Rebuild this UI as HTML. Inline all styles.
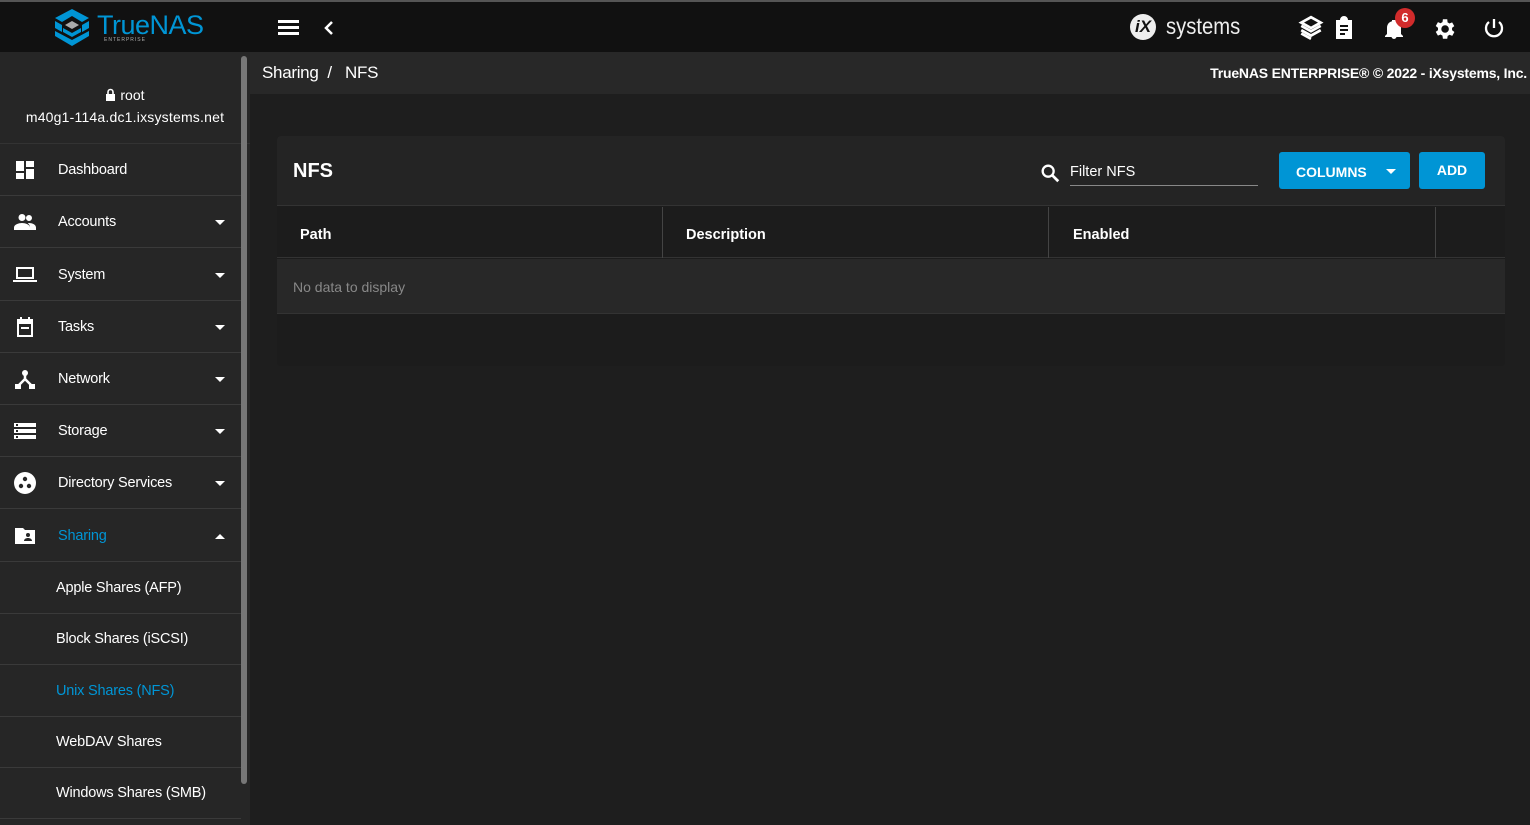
<!DOCTYPE html>
<html><head><meta charset="utf-8"><style>
*{margin:0;padding:0;box-sizing:border-box}
body{width:1530px;height:825px;overflow:hidden;background:#1e1e1e;font-family:"Liberation Sans",sans-serif;color:#fff;position:relative}
.top{position:absolute;left:0;top:0;width:1530px;height:52px;background:#111;border-top:2px solid #555}
.side{position:absolute;left:0;top:52px;width:250px;height:773px;background:#262626}
.scroll{position:absolute;left:241px;top:56px;width:6px;height:728px;background:#777;border-radius:3px}
.user{position:absolute;left:0;top:0;width:250px;height:92px;text-align:center;font-size:14px;border-bottom:1px solid #333}
.item{position:absolute;left:0;width:241px;height:52px;border-bottom:1px solid #3a3a3a;font-size:14.5px;display:flex;align-items:center}
.item .ic{position:absolute;left:13px;top:14px;width:24px;height:24px}
.item .lb{position:absolute;left:58px;top:18px;letter-spacing:-0.2px}
.item .ar{position:absolute;left:215px;top:24px;width:0;height:0;border-left:5px solid transparent;border-right:5px solid transparent;border-top:5px solid #fff}
.sub .lb{left:56px}
.crumb{position:absolute;left:250px;top:52px;width:1280px;height:42px;background:#282828}
.card{position:absolute;left:277px;top:136px;width:1228px;height:230px;background:#1c1c1c;border-radius:4px;overflow:hidden}
.btn{position:absolute;background:#0095d5;border-radius:3px;font-weight:bold;font-size:14px;color:#fff}
</style></head><body>
<div class="top">
 <svg style="position:absolute;left:53px;top:6px" width="38" height="40" viewBox="0 0 38 40"><g fill="#0095d5"><path d="M19 1 L36 10 L29 14 L19 8 L9 14 L2 10Z"/><path d="M2 13 L9 17 L9 24 L2 20Z M36 13 L29 17 L29 24 L36 20Z"/><path d="M2 23 L19 32 L36 23 L36 28 L19 38 L2 28Z"/><path d="M12 17 L19 13 L26 17 L19 21Z" fill="#aaa"/><path d="M10 20 L19 25 L28 20 L28 24 L19 29 L10 24Z"/></g></svg>
 <div style="position:absolute;left:97px;top:8px;font-size:27px;color:#0095d5;letter-spacing:-0.5px">TrueNAS</div>
 <div style="position:absolute;left:104px;top:35px;font-size:5px;color:#aaa;letter-spacing:1px">ENTERPRISE</div>
 <div style="position:absolute;left:278px;top:18px;width:21px;height:3px;background:#fff;box-shadow:0 6px 0 #fff,0 12px 0 #fff"></div>
 <svg style="position:absolute;left:323px;top:18px" width="12" height="16"><path d="M9 2 L3 8 L9 14" stroke="#fff" stroke-width="2.5" fill="none"/></svg>
 <div style="position:absolute;left:1130px;top:12px;width:26px;height:26px;border-radius:50%;background:#eee;color:#111;font-weight:bold;font-size:17px;text-align:center;line-height:26px;font-style:italic">iX</div>
 <div style="position:absolute;left:1166px;top:11px;font-size:23px;color:#eee;transform:scaleX(0.88);transform-origin:left">systems</div>
 <svg style="position:absolute;left:1298px;top:13px" width="26" height="26" viewBox="0 0 24 24"><path d="M12 2 L21 7 L12 12 L3 7Z M3 10 L12 15 L21 10 M3 14 L12 19 L21 14 M3 17 L12 22" stroke="#fff" stroke-width="2.5" fill="none"/></svg>
 <svg style="position:absolute;left:1332px;top:13px" width="24" height="26" viewBox="0 0 24 24"><path d="M4 4h4a4 4 0 0 1 8 0h4v19H4Z" fill="#fff"/><path d="M8 10h8M8 14h8M8 18h5" stroke="#111" stroke-width="2"/></svg>
 <svg style="position:absolute;left:1382px;top:14px" width="24" height="26" viewBox="0 0 24 24"><path d="M12 22a2.5 2.5 0 0 0 2.5-2.5h-5A2.5 2.5 0 0 0 12 22zM19 17V11c0-3.5-2-6-5-6.7V3h-4v1.3C7 5 5 7.5 5 11v6l-2 2v1h18v-1z" fill="#fff"/></svg>
 <div style="position:absolute;left:1395px;top:6px;width:20px;height:20px;border-radius:50%;background:#d12b2b;font-size:13px;font-weight:bold;text-align:center;line-height:20px">6</div>
 <svg style="position:absolute;left:1431px;top:14px" width="26" height="26" viewBox="0 0 24 24"><path fill="#fff" d="M19.4 13a7.5 7.5 0 0 0 0-2l2.1-1.6-2-3.5-2.5 1a7 7 0 0 0-1.7-1L15 3h-4l-.4 2.7a7 7 0 0 0-1.7 1l-2.5-1-2 3.5L6.5 11a7.5 7.5 0 0 0 0 2l-2.1 1.6 2 3.5 2.5-1a7 7 0 0 0 1.7 1L11 21h4l.4-2.7a7 7 0 0 0 1.7-1l2.5 1 2-3.5zM13 15.5a3.5 3.5 0 1 1 0-7 3.5 3.5 0 0 1 0 7z"/></svg>
 <svg style="position:absolute;left:1482px;top:14px" width="24" height="24" viewBox="0 0 24 24"><path d="M12 3v9M7 6a8 8 0 1 0 10 0" stroke="#fff" stroke-width="2.3" fill="none"/></svg>
</div>
<div class="side">
 <div class="user"><div style="position:absolute;width:250px;top:35px"><svg width="11" height="13" viewBox="0 0 11 13" style="vertical-align:-1px"><path d="M3 6V4a2.5 2.5 0 0 1 5 0v2" stroke="#fff" stroke-width="1.6" fill="none"/><rect x="1" y="6" width="9" height="7" fill="#fff"/></svg> root</div><div style="position:absolute;width:250px;top:57px;letter-spacing:0.2px">m40g1-114a.dc1.ixsystems.net</div></div>
 <div class="item" style="top:92px"><svg class="ic" viewBox="0 0 24 24"><path fill="#fff" d="M3 3h8v10H3zM13 3h8v6h-8zM13 11h8v10h-8zM3 15h8v6H3z"/></svg><span class="lb">Dashboard</span></div>
 <div class="item" style="top:144px"><svg class="ic" viewBox="0 0 24 24"><path fill="#fff" d="M9 11a3.5 3.5 0 1 0 0-7 3.5 3.5 0 0 0 0 7zm7 0a3 3 0 1 0 0-6 3 3 0 0 0 0 6zM9 13c-3 0-8 1.5-8 4.5V20h16v-2.5C17 14.5 12 13 9 13zm7 0c-.4 0-.8 0-1.2.1 1.3 1 2.2 2.4 2.2 4.4V20h6v-2.5c0-3-4-4.5-7-4.5z"/></svg><span class="lb">Accounts</span><span class="ar"></span></div>
 <div class="item" style="top:197px"><svg class="ic" viewBox="0 0 24 24"><path fill="#fff" d="M3 4h18v12H3zM5 6v8h14V6zM0 17h24v2H0z"/></svg><span class="lb">System</span><span class="ar"></span></div>
 <div class="item" style="top:249px"><svg class="ic" viewBox="0 0 24 24"><path fill="#fff" d="M4 4h3V2h2v2h6V2h2v2h3v18H4zm2 5v11h12V9zM8 12h8v2H8z"/></svg><span class="lb">Tasks</span><span class="ar"></span></div>
 <div class="item" style="top:301px"><svg class="ic" viewBox="0 0 24 24"><circle cx="12" cy="6" r="3" fill="#fff"/><path d="M12 6v6L5 19M12 12l7 7" stroke="#fff" stroke-width="2.5" fill="none"/><rect x="2" y="17" width="6" height="5" fill="#fff"/><rect x="16" y="17" width="6" height="5" fill="#fff"/></svg><span class="lb">Network</span><span class="ar"></span></div>
 <div class="item" style="top:353px"><svg class="ic" viewBox="0 0 24 24"><path fill="#fff" d="M1 4h22v4H1zm0 6h22v4H1zm0 6h22v4H1z"/><path fill="#262626" d="M3 5h2v2H3zm0 6h2v2H3zm0 6h2v2H3z"/></svg><span class="lb">Storage</span><span class="ar"></span></div>
 <div class="item" style="top:405px"><svg class="ic" viewBox="0 0 24 24"><circle cx="12" cy="12" r="11" fill="#fff"/><circle cx="12" cy="8" r="2.2" fill="#262626"/><circle cx="8" cy="15" r="2.2" fill="#262626"/><circle cx="16" cy="15" r="2.2" fill="#262626"/></svg><span class="lb">Directory Services</span><span class="ar"></span></div>
 <div class="item" style="top:458px"><svg class="ic" viewBox="0 0 24 24"><path fill="#fff" d="M2 4h8l2 2h10v14H2z"/><circle cx="15" cy="11" r="2" fill="#262626"/><path fill="#262626" d="M11 17c0-2 2-3 4-3s4 1 4 3z"/></svg><span class="lb" style="color:#0095d5">Sharing</span><span class="ar" style="border-top:0;border-bottom:5px solid #fff"></span></div>
 <div class="item sub" style="top:510px"><span class="lb">Apple Shares (AFP)</span></div>
 <div class="item sub" style="top:561px"><span class="lb">Block Shares (iSCSI)</span></div>
 <div class="item sub" style="top:613px"><span class="lb" style="color:#0095d5">Unix Shares (NFS)</span></div>
 <div class="item sub" style="top:664px"><span class="lb">WebDAV Shares</span></div>
 <div class="item sub" style="top:715px"><span class="lb">Windows Shares (SMB)</span></div>
</div>
<div class="scroll"></div>
<div class="crumb"><div style="position:absolute;left:12px;top:11px;font-size:17px;letter-spacing:-0.3px">Sharing &nbsp;/ &nbsp; NFS</div><div style="position:absolute;right:3px;top:13px;font-size:14px;font-weight:bold;letter-spacing:-0.2px">TrueNAS ENTERPRISE® © 2022 - iXsystems, Inc.</div></div>
<div class="card">
 <div style="position:absolute;left:0;top:0;width:1228px;height:70px;background:#242424;border-bottom:1px solid #333"></div>
 <div style="position:absolute;left:16px;top:24px;font-size:20px;font-weight:bold">NFS</div>
 <svg style="position:absolute;left:762px;top:26px" width="22" height="22" viewBox="0 0 24 24"><circle cx="10" cy="10" r="6" stroke="#fff" stroke-width="2.5" fill="none"/><path d="M14.5 14.5L21 21" stroke="#fff" stroke-width="3"/></svg>
 <div style="position:absolute;left:793px;top:28px;font-size:14.5px">Filter NFS</div>
 <div style="position:absolute;left:793px;top:49px;width:188px;height:1px;background:#888"></div>
 <div class="btn" style="left:1002px;top:16px;width:131px;height:37px"><span style="position:absolute;left:17px;top:12px">COLUMNS</span><span style="position:absolute;left:107px;top:17px;border-left:5px solid transparent;border-right:5px solid transparent;border-top:5px solid #fff"></span></div>
 <div class="btn" style="left:1142px;top:16px;width:66px;height:37px;text-align:center;line-height:37px">ADD</div>
 <div style="position:absolute;left:0;top:71px;width:1228px;height:51px;border-bottom:1px solid #333;font-size:14.5px;font-weight:bold">
  <span style="position:absolute;left:23px;top:20px">Path</span>
  <div style="position:absolute;left:385px;top:0;width:1px;height:51px;background:#444"></div>
  <span style="position:absolute;left:409px;top:20px">Description</span>
  <div style="position:absolute;left:771px;top:0;width:1px;height:51px;background:#444"></div>
  <span style="position:absolute;left:796px;top:20px">Enabled</span>
  <div style="position:absolute;left:1158px;top:0;width:1px;height:51px;background:#444"></div>
 </div>
 <div style="position:absolute;left:0;top:123px;width:1228px;height:55px;background:#282828;border-bottom:1px solid #333"><span style="position:absolute;left:16px;top:20px;font-size:14px;color:#888">No data to display</span></div>
</div>
</body></html>
